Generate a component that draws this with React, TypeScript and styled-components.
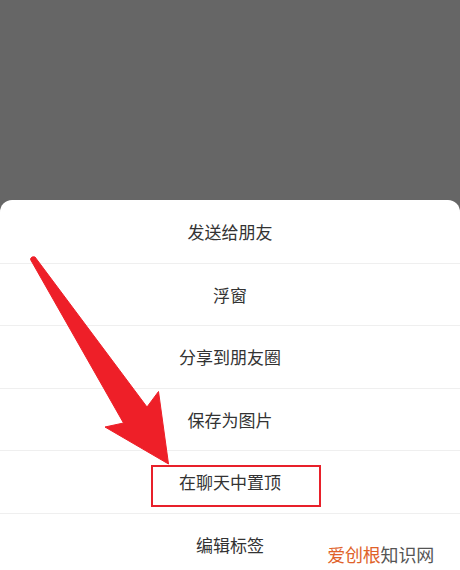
import { createGlobalStyle, styled } from "styled-components";

const GlobalStyle = createGlobalStyle`
  html, body {
    margin: 0;
    padding: 0;
    background: #666666;
  }
  body {
    font-family: "Noto Sans CJK SC", "Noto Sans", sans-serif;
  }
`;

const Screen = styled.div`
  width: 460px;
  height: 570px;
  overflow: hidden;
  display: flex;
  flex-direction: column;
  background: #666666;
`;

const Backdrop = styled.div`
  height: 200px;
  flex-shrink: 0;
`;

const Sheet = styled.div`
  position: relative;
  flex: 1;
  background: #ffffff;
  border-radius: 12px 12px 0 0;
  padding-top: 1px;
  display: flex;
  flex-direction: column;
`;

const Row = styled.div`
  position: relative;
  height: 62.5px;
  box-sizing: border-box;
  flex-shrink: 0;
  display: flex;
  align-items: center;
  justify-content: center;
  border-bottom: 1px solid #efefef;
  font-size: 17px;
  color: #333333;
`;

const Highlight = styled.div`
  position: absolute;
  left: 151px;
  top: 14px;
  width: 170px;
  height: 42px;
  box-sizing: border-box;
  border: 2px solid #e8202a;
`;

const Arrow = styled.svg`
  position: absolute;
  left: 0;
  top: 0;
  width: 460px;
  height: 370px;
  pointer-events: none;
`;

const Watermark = styled.div`
  position: absolute;
  right: 26px;
  bottom: 9px;
  font-size: 18px;
  letter-spacing: -0.2px;
  color: #555555;
`;

const Brand = styled.span`
  color: #e0622a;
`;

const items = [
  "发送给朋友",
  "浮窗",
  "分享到朋友圈",
  "保存为图片",
  "在聊天中置顶",
  "编辑标签",
];

export default function App() {
  return (
    <>
      <GlobalStyle />
      <Screen>
        <Backdrop />
        <Sheet>
          {items.map((label, i) => (
            <Row key={label}>
              {label}
              {i === 4 && <Highlight />}
            </Row>
          ))}
          <Arrow viewBox="0 200 460 370">
            <path
              d="M 30.5 259.5 Q 31 256 35 257 L 147 407 L 158.5 391.5 L 168.5 464 L 105 427 L 123.5 423 Z"
              fill="#ee1f28"
              stroke="#ee1f28"
              strokeWidth="1"
              strokeLinejoin="round"
            />
          </Arrow>
          <Watermark>
            <Brand>爱创根</Brand>知识网
          </Watermark>
        </Sheet>
      </Screen>
    </>
  );
}
